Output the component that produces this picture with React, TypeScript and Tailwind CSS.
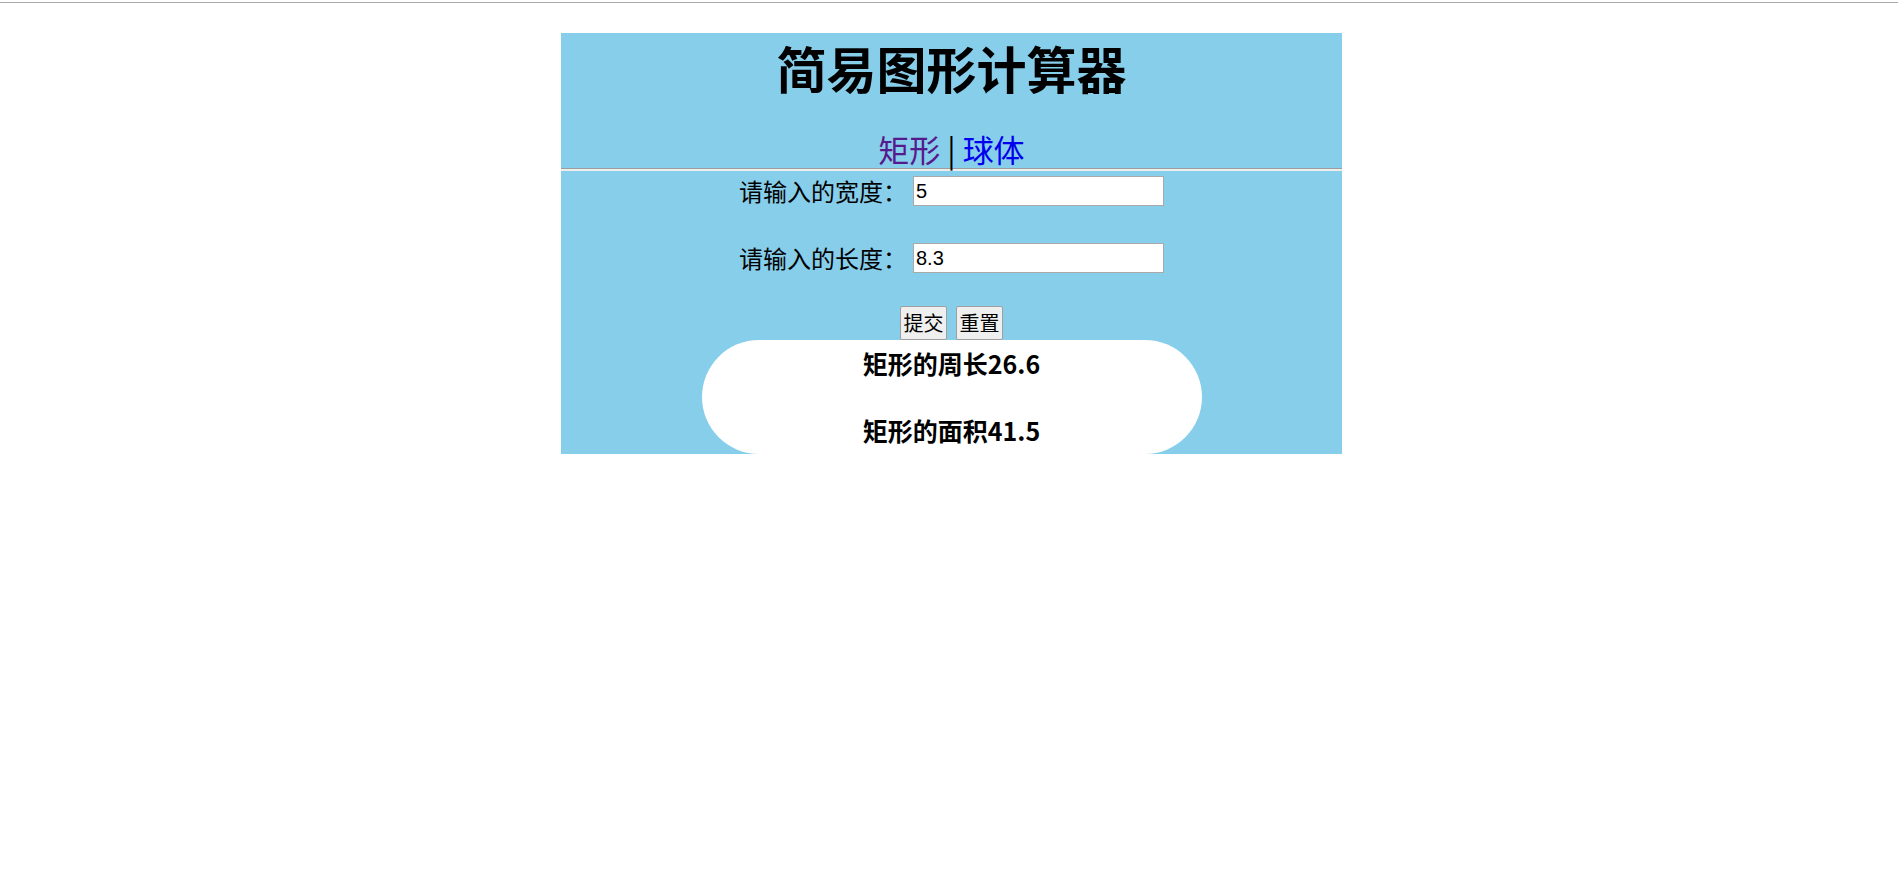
import React from "react";

const cjk = "font-['Noto_Sans_CJK_SC','Noto_Sans',sans-serif]";

function Row({ label, value }: { label: string; value: string }) {
  return (
    <div className="flex h-[30px] items-center justify-center">
      <span className="text-[24px] leading-[30px] text-black">{label}</span>
      <input
        readOnly
        value={value}
        className="ml-[6px] h-[30px] w-[251px] border border-[#a9a9a9] bg-white px-[2px] font-['Liberation_Sans',sans-serif] text-[20px] text-black outline-none"
      />
    </div>
  );
}

export default function App() {
  return (
    <div className={`min-h-[892px] bg-white ${cjk}`}>
      <div className="h-[3px] border-b border-[#aaaaaa]" />
      <div className="ml-[561px] mt-[30px] h-[421px] w-[781px] bg-[#87ceeb]">
        <h1 className="h-[64px] text-center text-[50px] font-bold leading-[68px] text-black">
          简易图形计算器
        </h1>
        <div className="mt-[34px] text-center text-[31px] leading-[36px] text-black">
          <a className="text-[#551a8b]">矩形</a> | <a className="text-[#0000ee]">球体</a>
        </div>
        <div className="mt-[1px] h-[3px] border-t border-b-2 border-t-[#9d9d9d] border-b-[#eeeeee]" />

        <div className="mt-[5px]">
          <Row label="请输入的宽度：" value="5" />
        </div>
        <div className="mt-[37px]">
          <Row label="请输入的长度：" value="8.3" />
        </div>

        <div className="mt-[33px] flex h-[34px] justify-center gap-[9px]">
          <button className="h-[34px] w-[47px] rounded-[2px] border border-[#9f9f9f] bg-[#efefef] text-[20px] leading-none text-black">
            提交
          </button>
          <button className="h-[34px] w-[47px] rounded-[2px] border border-[#9f9f9f] bg-[#efefef] text-[20px] leading-none text-black">
            重置
          </button>
        </div>

        <div className="mx-auto h-[114px] w-[500px] rounded-full bg-white pt-[7px] text-center">
          <h3 className="text-[25px] font-bold leading-[32px] text-black">矩形的周长26.6</h3>
          <h3 className="mt-[35px] text-[25px] font-bold leading-[32px] text-black">矩形的面积41.5</h3>
        </div>
      </div>
    </div>
  );
}
